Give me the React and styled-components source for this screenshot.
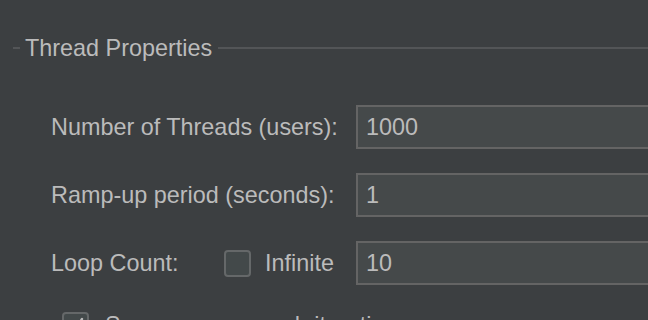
import React from "react";
import styled, { createGlobalStyle } from "styled-components";

const GlobalStyle = createGlobalStyle`
  html, body {
    margin: 0;
    padding: 0;
    background: #3c3f41;
    overflow: hidden;
  }
  body {
    font-family: "Liberation Sans", Arial, Helvetica, sans-serif;
    color: #bbbbbb;
  }
`;

const Panel = styled.div`
  width: 720px;
  height: 320px;
  padding-top: 33px;
  box-sizing: border-box;
`;

const TitleRow = styled.div`
  display: flex;
  align-items: center;
  height: 30px;
  padding-left: 13px;
`;

const Line = styled.div`
  height: 2px;
  background: #535557;
  width: ${(p) => (p.$grow ? "auto" : "7px")};
  flex: ${(p) => (p.$grow ? "1" : "none")};
`;

const Title = styled.span`
  font-size: 23.4px;
  padding: 0 6px 0 5px;
  color: #bbbbbb;
`;

const Form = styled.div`
  display: grid;
  grid-template-columns: 286px 1fr;
  column-gap: 19px;
  row-gap: 24px;
  margin-top: 42px;
  padding-left: 51px;
`;

const Label = styled.div`
  display: flex;
  align-items: center;
  height: 44px;
  font-size: 23.4px;
  white-space: nowrap;
`;

const LabelText = styled.span`
  width: ${(p) => (p.$width ? `${p.$width}px` : "auto")};
  flex: none;
`;

const Field = styled.div`
  height: 44px;
  box-sizing: border-box;
  border: 2px solid #646464;
  background: #45494a;
  display: flex;
  align-items: center;
  padding-left: 8px;
  font-size: 23.4px;
  color: #bbbbbb;
`;

const Box = styled.span`
  width: 27px;
  height: 27px;
  box-sizing: border-box;
  border: 2px solid #656869;
  border-radius: 4px;
  background: #43494a;
  display: inline-flex;
  align-items: center;
  justify-content: center;
  flex: none;
  margin-right: ${(p) => p.$gap || 14}px;
`;

const CheckRow = styled.div`
  grid-column: 1 / span 2;
  display: flex;
  align-items: flex-start;
  padding: 3px 0 0 11px;
  font-size: 23.4px;
  white-space: nowrap;
`;

const Check = ({ checked, gap }) => (
  <Box $gap={gap}>
    {checked && (
      <svg width="19" height="19" viewBox="0 0 19 19">
        <path
          d="M3 10 L8 15 L16 3"
          fill="none"
          stroke="#bbbbbb"
          strokeWidth="2.4"
          strokeLinecap="round"
          strokeLinejoin="round"
        />
      </svg>
    )}
  </Box>
);

export default function App() {
  return (
    <>
      <GlobalStyle />
      <Panel>
        <TitleRow>
          <Line />
          <Title>Thread Properties</Title>
          <Line $grow />
        </TitleRow>
        <Form>
          <Label>Number of Threads (users):</Label>
          <Field>1000</Field>

          <Label>Ramp-up period (seconds):</Label>
          <Field>1</Field>

          <Label>
            <LabelText $width={173}>Loop Count:</LabelText>
            <Check gap={14} />
            Infinite
          </Label>
          <Field>10</Field>

          <CheckRow>
            <Check checked gap={16} />
            Same user on each iteration
          </CheckRow>
        </Form>
      </Panel>
    </>
  );
}
